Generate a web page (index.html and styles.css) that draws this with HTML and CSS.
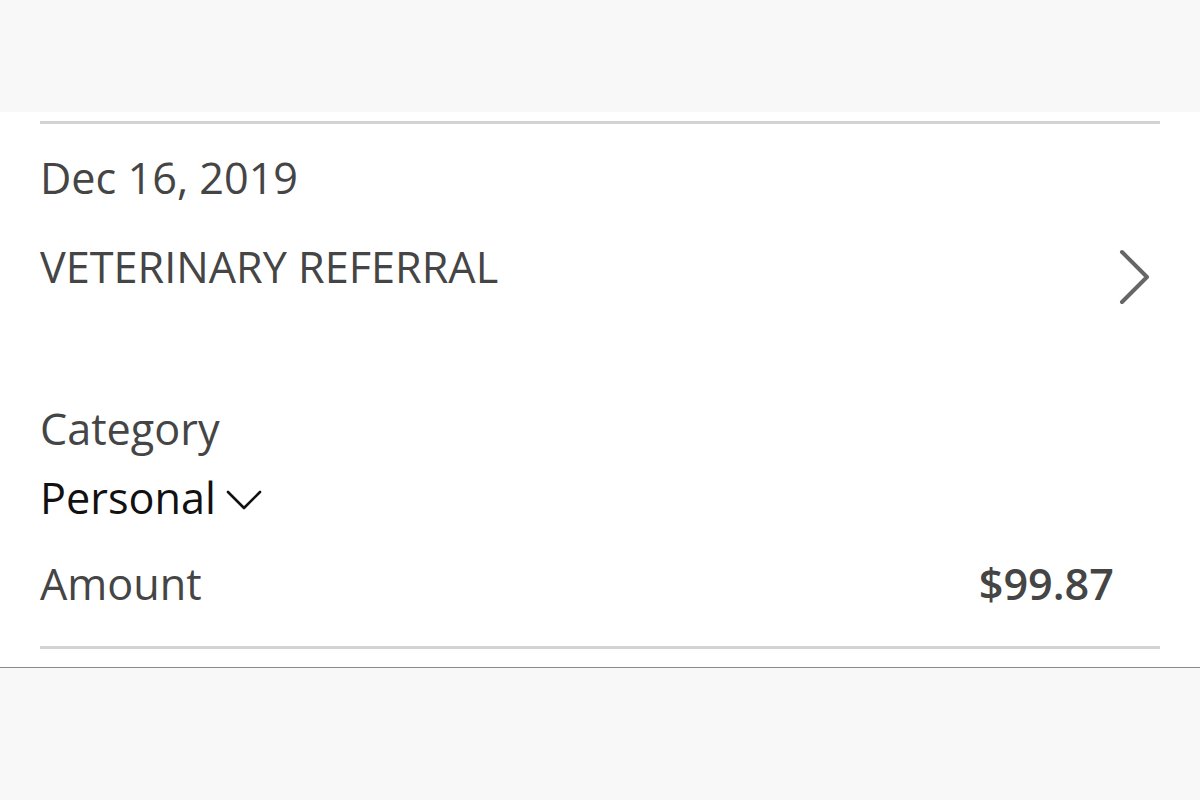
FILE: index.html
```html
<!DOCTYPE html>
<html>
<head>
<meta charset="utf-8">
<link rel="stylesheet" href="styles.css">
</head>
<body>
<div class="topbar"></div>
<main class="card">
  <div class="rule"></div>
  <div class="date">Dec 16, 2019</div>
  <div class="title-row">
    <div class="title">VETERINARY REFERRAL</div>
    <svg class="chev-right" width="32" height="58" viewBox="0 0 32 58"><path d="M4 4 L29 29 L4 54" fill="none" stroke="#666" stroke-width="4" stroke-linecap="round" stroke-linejoin="round"/></svg>
  </div>
  <div class="label cat">Category</div>
  <div class="select">
    <span class="select-text">Personal</span>
    <svg class="chev-down" width="36" height="22" viewBox="0 0 36 22"><path d="M2 3 L18 19 L34 3" fill="none" stroke="#111" stroke-width="2.6" stroke-linecap="round" stroke-linejoin="round"/></svg>
  </div>
  <div class="amount-row">
    <div class="label">Amount</div>
    <div class="amount">$99.87</div>
  </div>
  <div class="rule bottom"></div>
</main>
<div class="footer"></div>
</body>
</html>
```
FILE: styles.css
```css
html, body {
  margin: 0;
  padding: 0;
  background: #f8f8f8;
  font-family: "Open Sans", "Noto Sans", sans-serif;
}
.topbar {
  height: 112px;
}
.card {
  background: #fff;
  height: 546px;
  border-bottom: 1px solid #8a8a8a;
  padding: 9px 40px 0;
  box-sizing: content-box;
  display: flex;
  flex-direction: column;
}
.rule {
  height: 3px;
  background: #d3d3d3;
  flex: none;
}
.date, .title, .label, .select-text, .amount {
  font-size: 43.2px;
  line-height: 57px;
  color: #454545;
}
.date {
  margin-top: 25px;
}
.title-row {
  margin-top: 32px;
  height: 57px;
  display: flex;
  align-items: flex-start;
  justify-content: space-between;
}
.chev-right {
  margin-right: 10px;
  margin-top: 10px;
}
.cat {
  margin-top: 105px;
}
.select {
  margin-top: 12px;
  display: flex;
  align-items: center;
}
.select-text {
  color: #111;
}
.chev-down {
  margin-left: 10px;
  margin-top: 4px;
}
.amount-row {
  margin-top: 29px;
  display: flex;
  justify-content: space-between;
  align-items: baseline;
}
.amount {
  font-weight: 600;
  margin-right: 46px;
}
.rule.bottom {
  margin-top: 34px;
}
.footer {
  height: 132px;
}
```
